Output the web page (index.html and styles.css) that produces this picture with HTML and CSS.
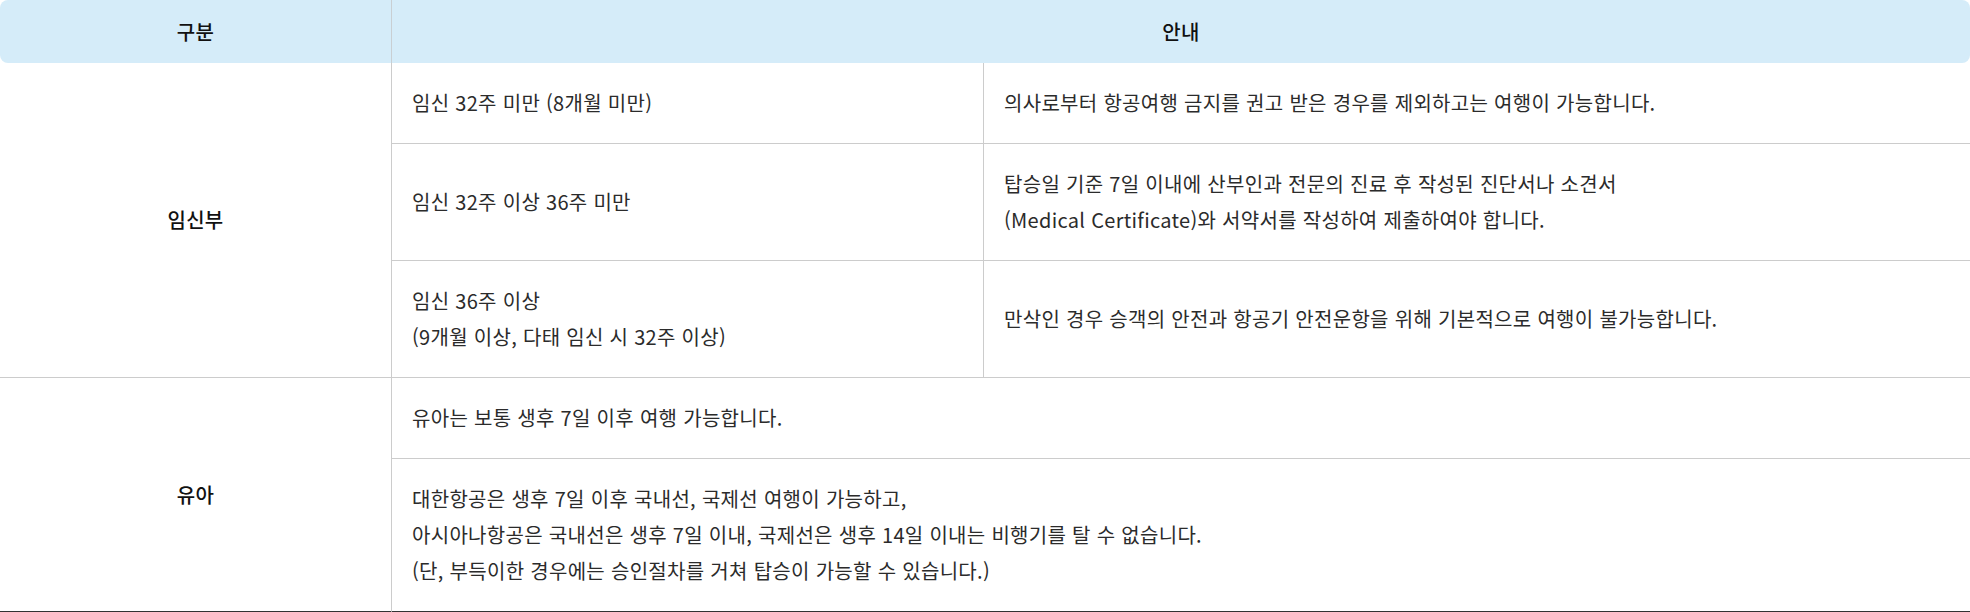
FILE: index.html
```html
<!DOCTYPE html>
<html lang="ko">
<head>
<meta charset="utf-8">
<title>임신부 및 유아 탑승 안내</title>
<link rel="stylesheet" href="styles.css">
</head>
<body>
<table class="guide">
  <colgroup>
    <col class="c1">
    <col class="c2">
    <col class="c3">
  </colgroup>
  <thead>
    <tr>
      <th class="h-first">구분</th>
      <th class="h-last" colspan="2">안내</th>
    </tr>
  </thead>
  <tbody>
    <tr>
      <td class="cat" rowspan="3">임신부</td>
      <td class="sub">임신 32주 미만 (8개월 미만)</td>
      <td class="desc">의사로부터 항공여행 금지를 권고 받은 경우를 제외하고는 여행이 가능합니다.</td>
    </tr>
    <tr>
      <td class="sub">임신 32주 이상 36주 미만</td>
      <td class="desc">탑승일 기준 7일 이내에 산부인과 전문의 진료 후 작성된 진단서나 소견서<br>(Medical Certificate)와 서약서를 작성하여 제출하여야 합니다.</td>
    </tr>
    <tr>
      <td class="sub">임신 36주 이상<br>(9개월 이상, 다태 임신 시 32주 이상)</td>
      <td class="desc">만삭인 경우 승객의 안전과 항공기 안전운항을 위해 기본적으로 여행이 불가능합니다.</td>
    </tr>
    <tr>
      <td class="cat last" rowspan="2">유아</td>
      <td class="sub" colspan="2">유아는 보통 생후 7일 이후 여행 가능합니다.</td>
    </tr>
    <tr>
      <td class="sub last" colspan="2">대한항공은 생후 7일 이후 국내선, 국제선 여행이 가능하고,<br>아시아나항공은 국내선은 생후 7일 이내, 국제선은 생후 14일 이내는 비행기를 탈 수 없습니다.<br>(단, 부득이한 경우에는 승인절차를 거쳐 탑승이 가능할 수 있습니다.)</td>
    </tr>
  </tbody>
</table>
</body>
</html>
```
FILE: styles.css
```css
html, body {
  margin: 0;
  padding: 0;
  background: #ffffff;
}

body {
  font-family: "Noto Sans CJK KR", "Noto Sans", sans-serif;
  color: #2b2b2b;
}

.guide {
  width: 1970px;
  border-collapse: separate;
  border-spacing: 0;
  table-layout: fixed;
  font-size: 20px;
  letter-spacing: 0.3px;
}

.c1 { width: 391px; }
.c2 { width: 592px; }

.guide th {
  height: 63px;
  padding: 0;
  background: #d5ecf9;
  color: #111111;
  font-weight: 500;
  text-align: center;
  vertical-align: middle;
  line-height: 36px;
}

.h-first {
  border-radius: 8px 0 0 8px;
}

.h-last {
  border-left: 1px solid #c9cfd3;
  border-radius: 0 8px 8px 0;
}

.guide td {
  padding: 22px 20px;
  line-height: 36px;
  vertical-align: middle;
  text-align: left;
  border-bottom: 1px solid #cccccc;
  border-left: 1px solid #cccccc;
}

.guide td.cat {
  border-left: 0;
  text-align: center;
  color: #111111;
  font-weight: 500;
}

.guide td.last {
  border-bottom: 2px solid #333333;
}
```
